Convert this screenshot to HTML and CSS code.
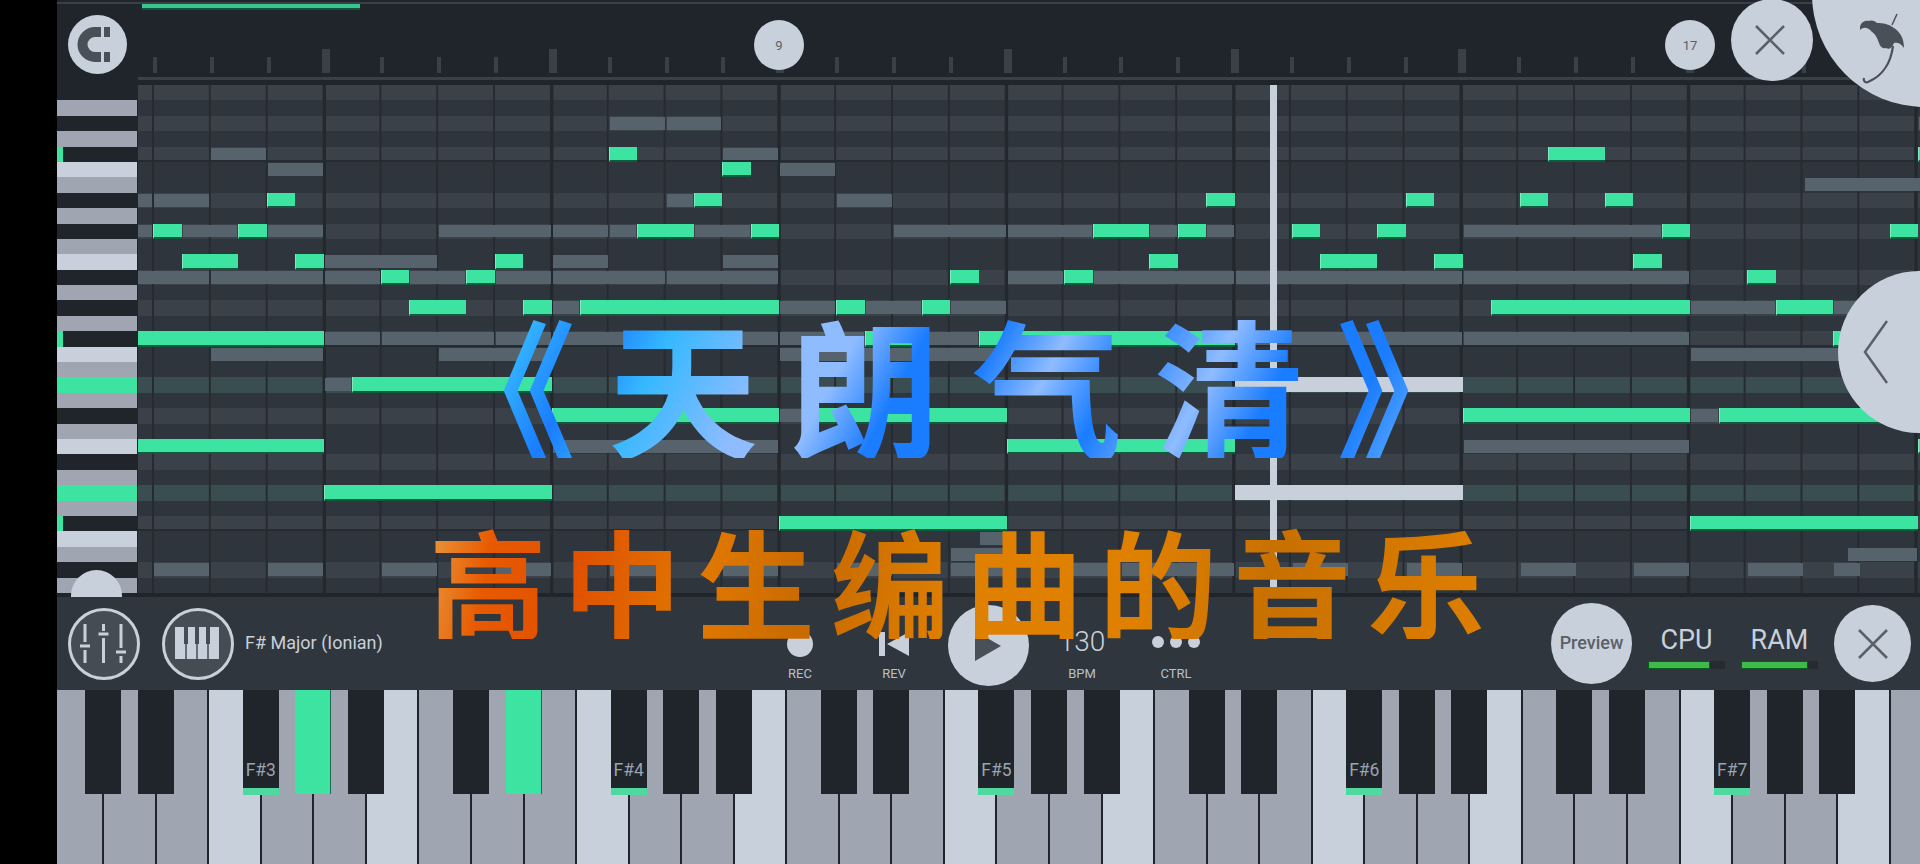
FILE: index.html
```html
<!DOCTYPE html>
<html lang="zh-CN">
<head>
  <meta charset="UTF-8">
  <meta name="viewport" content="width=device-width, initial-scale=1.0">
  <title>天朗气清 - Piano Roll</title>
  <link rel="stylesheet" href="styles.css">
</head>
<body>
  <div class="app">

    <div class="ruler">
      <div class="magnet-cell">
        <div class="magnet">
          <svg width="59" height="59" viewBox="0 0 59 59">
            <path d="M33 17H27A12.5 12.5 0 0 0 27 42H33" fill="none" stroke="#4a5058" stroke-width="10"/>
            <rect x="36" y="12" width="6" height="10" fill="#4a5058"/>
            <rect x="36" y="37" width="6" height="10" fill="#4a5058"/>
          </svg>
        </div>
      </div>
      <div class="ruler-main">
        <div class="minimap-bar"></div>
        <div class="ticks" id="ticks"></div>
        <div class="ruler-line"></div>
      </div>
    </div>

    <div class="roll">
      <div class="side-keys" id="sideKeys">
        <div class="scroll-knob"></div>
      </div>
      <div class="grid">
        <div class="grid-rows" id="gridRows"></div>
        <div class="grid-lines"></div>
        <div class="notes" id="notes"></div>
        <div class="playhead"></div>
      </div>
    </div>

    <div class="toolbar">
      <div class="tool-left">
        <div class="ring-btn">
          <svg width="66" height="66" viewBox="3 3 66 66" stroke="#c8d0dc" stroke-width="3" fill="none">
            <path d="M17 16V34M17 42V55M12 38H22M35.500 16V23M35.500 30V55M30.500 26H40.500M53 16V40M53 48V55M48 44H58"/>
          </svg>
        </div>
        <div class="ring-btn">
          <svg width="66" height="66" viewBox="3 3 66 66">
            <rect x="13" y="19" width="44" height="32" fill="#c8d0dc"/>
            <path d="M24 19V51M35 19V51M46 19V51" stroke="#454c54" stroke-width="1.500"/>
            <path d="M24 19V36M35 19V36M46 19V36" stroke="#454c54" stroke-width="4"/>
          </svg>
        </div>
        <span class="scale-name">F# Major (Ionian)</span>
      </div>

      <div class="transport">
        <div class="transport-item">
          <div class="transport-icon"><span class="rec-dot"></span></div>
          <span class="transport-label">REC</span>
        </div>
        <div class="transport-item">
          <div class="transport-icon">
            <svg width="32" height="24" viewBox="0 0 32 24">
              <rect x="1" y="0" width="6" height="24" fill="#c8d0dc"/>
              <path d="M31 0V24L9 12Z" fill="#c8d0dc"/>
            </svg>
          </div>
          <span class="transport-label">REV</span>
        </div>
        <div class="transport-item play-item">
          <div class="play-btn">
            <svg width="28" height="30" viewBox="0 0 28 30"><path d="M1 0L27 15L1 30Z" fill="#4a5058"/></svg>
          </div>
        </div>
        <div class="transport-item">
          <div class="transport-icon bpm-value">130</div>
          <span class="transport-label">BPM</span>
        </div>
        <div class="transport-item">
          <div class="transport-icon dots"><span></span><span></span><span></span></div>
          <span class="transport-label">CTRL</span>
        </div>
      </div>

      <div class="tool-right">
        <div class="preview-btn">Preview</div>
        <div class="meter-box">
          <span class="meter-name">CPU</span>
          <div class="meter"><div class="meter-fill cpu-fill"></div></div>
        </div>
        <div class="meter-box">
          <span class="meter-name">RAM</span>
          <div class="meter"><div class="meter-fill ram-fill"></div></div>
        </div>
        <div class="close-btn">
          <svg width="30" height="30" viewBox="0 0 30 30"><path d="M1 1L29 29M29 1L1 29" stroke="#5a6068" stroke-width="2.500"/></svg>
        </div>
      </div>
    </div>

    <div class="keyboard" id="keyboard"></div>

    <!-- round buttons lying over the roll -->
    <div class="bar-bubble bubble-9">9</div>
    <div class="bar-bubble bubble-17">17</div>
    <div class="top-close">
      <svg width="30" height="30" viewBox="0 0 30 30"><path d="M1 1L29 29M29 1L1 29" stroke="#5a6068" stroke-width="2.500"/></svg>
    </div>
    <div class="logo-btn">
      <svg class="logo-fruit" width="60" height="80" viewBox="0 0 60 80">
        <path d="M5 17C6 12 10 10 14 11C17 10 20 11 22 13C28 13 34 14 39 18C45 22 49 28 49 38C46 33 42 32 39 33C37 38 34 40 31 38C28 39 25 37 24 33C22 27 20 24 17 22C14 18 9 16 5 20Z" fill="#4a5058"/>
        <path d="M38 36C36 52 28 66 13 72C10 73 8 71 9 68" fill="none" stroke="#4a5058" stroke-width="2.200"/>
        <path d="M37 15L42 4" fill="none" stroke="#4a5058" stroke-width="1.500"/>
      </svg>
    </div>
    <div class="side-tab">
      <svg class="side-chevron" width="26" height="64" viewBox="0 0 26 64"><path d="M24 1L2 32L24 63" fill="none" stroke="#5a6068" stroke-width="2.500"/></svg>
    </div>

    <!-- video title on top of everything -->
    <div class="title-main">《天朗气清》</div>
    <div class="title-sub">高中生编曲的音乐</div>
  </div>

  <script src="app.js"></script>
</body>
</html>
```

FILE: styles.css
```css
:root {
  --bg: #20252c;
  --panel: #30363d;
  --light: #c8d0dc;
  --gray-key: #9fa6b2;
  --green: #3de3a0;
  --green-dark: #0b5d3e;
  --ghost: #56636c;
  --row-dark: #2f353c;
  --row-light: #3a4148;
  --icon: #5a6068;
}
* { box-sizing: border-box; margin: 0; padding: 0; }
html, body { height: 100%; }
body {
  background: #000;
  overflow: hidden;
  font-family: Roboto, sans-serif;
  color: var(--light);
}
.app {
  position: relative;
  margin-left: 57px;
  width: 1863px;
  height: 864px;
  overflow: hidden;
  background: var(--bg);
}

/* ruler */
.ruler {
  display: flex;
  height: 85px;
  background: linear-gradient(#3a4047, #3a4047) 0 2px / 100% 2px no-repeat var(--bg);
}
.magnet-cell {
  flex: none;
  width: 81px;
  padding: 15px 0 0 11px;
}
.magnet {
  width: 59px;
  height: 59px;
  border-radius: 50%;
  background: var(--light);
}
.ruler-main {
  flex: 1;
  min-width: 0;
  padding-top: 4px;
  overflow: hidden;
}
.minimap-bar {
  width: 218px;
  height: 6px;
  margin-left: 4px;
  background: var(--green);
  opacity: 0.85;
  border-bottom: 2px solid var(--green-dark);
}
.ticks {
  display: flex;
  align-items: flex-end;
  height: 24px;
  margin: 39px 0 0 -11.400px;
}
.tick-cell {
  flex: none;
  width: 56.850px;
  display: flex;
  justify-content: center;
}
.tick {
  width: 4px;
  height: 16px;
  background: #3a4047;
}
.tick.bar {
  width: 8px;
  height: 24px;
}
.ruler-line {
  height: 3px;
  margin-top: 4px;
  background: #3a4047;
}

/* piano roll */
.roll {
  display: flex;
  height: 512px;
}
.side-keys {
  position: relative;
  flex: none;
  width: 81px;
  padding-right: 1px;
  overflow: hidden;
}
.side-key {
  height: 15.400px;
  background: var(--gray-key);
  position: relative;
}
.side-key.black { background: var(--bg); }
.side-key.light { background: var(--light); }
.side-key.active { background: var(--green); }
.side-key.tip::before {
  content: '';
  position: absolute;
  left: 0;
  top: 0;
  width: 6px;
  height: 18px;
  background: var(--green);
}
.scroll-knob {
  position: absolute;
  left: 14px;
  top: 485px;
  width: 51px;
  height: 27px;
  border-radius: 26px 26px 0 0;
  background: var(--light);
}
.grid {
  position: relative;
  flex: 1;
  min-width: 0;
  overflow: hidden;
  background: var(--bg);
}
.grid-rows {
  display: grid;
  grid-template-rows: repeat(33, 15.400px);
}
.grid-row { background: var(--row-dark); }
.grid-row.lit { background: var(--row-light); }
.grid-row.tint { background: #3a4d50; }
.grid-row.octave { border-bottom: 2px solid #262b31; }
.grid-lines {
  position: absolute;
  left: 0;
  top: 0;
  width: 100%;
  height: 508px;
  background-image:
    linear-gradient(90deg, #23282e 3px, transparent 3px),
    linear-gradient(90deg, #262b31 2px, transparent 2px);
  background-size: 227.400px 100%, 56.850px 100%;
  background-position: 185px 0, 14px 0;
}
.notes {
  position: absolute;
  left: -13.400px;
  top: 0;
  display: grid;
  grid-template-columns: repeat(132, 14.235px);
  grid-template-rows: repeat(33, 15.400px);
}
.note {
  background: var(--ghost);
  margin: 1px 1px 1.500px;
}
.note.green {
  margin: 0;
  background: var(--green);
  border-left: 1px solid #7fe9c0;
  border-bottom: 2px solid var(--green-dark);
}
.note.white {
  margin: 0 0 1px;
  background: var(--light);
}
.playhead {
  position: absolute;
  left: 1132px;
  top: 0;
  bottom: 0;
  width: 7px;
  background: var(--light);
}

/* toolbar */
.toolbar {
  display: flex;
  height: 93px;
  background: var(--panel);
}
.tool-left {
  flex: none;
  width: 696px;
  display: flex;
  align-items: center;
  gap: 22px;
  padding-left: 11px;
}
.ring-btn {
  width: 72px;
  height: 72px;
  border: 3px solid var(--light);
  border-radius: 50%;
  background: #454c54;
}
.scale-name {
  margin-left: -11px;
  padding-bottom: 3px;
  font-size: 18px;
}
.transport {
  flex: none;
  display: flex;
}
.transport-item {
  width: 94px;
  padding-top: 24px;
  display: flex;
  flex-direction: column;
  align-items: center;
}
.play-item { padding-top: 8px; }
.transport-icon {
  height: 46px;
  display: flex;
  align-items: center;
  justify-content: center;
}
.transport-label {
  font-size: 13px;
  line-height: 14px;
  color: #b8c0cc;
}
.rec-dot {
  width: 26px;
  height: 26px;
  border-radius: 50%;
  background: var(--light);
}
.play-btn {
  width: 81px;
  height: 81px;
  border-radius: 50%;
  background: var(--light);
  display: flex;
  align-items: center;
  justify-content: center;
}
.bpm-value {
  padding-bottom: 6px;
  font-size: 28px;
  font-weight: 300;
}
.dots {
  gap: 6px;
  padding-bottom: 4px;
}
.dots span {
  width: 12px;
  height: 12px;
  border-radius: 50%;
  background: var(--light);
}
.tool-right {
  margin-left: auto;
  display: flex;
  align-items: center;
  gap: 16px;
  padding-right: 9px;
}
.preview-btn {
  width: 81px;
  height: 81px;
  border-radius: 50%;
  background: var(--light);
  color: var(--icon);
  display: flex;
  align-items: center;
  justify-content: center;
  padding-bottom: 3px;
  font-size: 18px;
  font-weight: 500;
}
.meter-box {
  width: 77px;
  margin-top: 6px;
  display: flex;
  flex-direction: column;
  align-items: center;
  gap: 6px;
}
.meter-name {
  font-size: 27px;
  line-height: 30px;
}
.meter {
  width: 100%;
  height: 8px;
  background: #262b31;
}
.meter-fill {
  height: 100%;
  background: #3dbb4a;
  border: 1px solid #0d5a1c;
}
.cpu-fill { width: 62px; }
.ram-fill { width: 67px; }
.close-btn {
  width: 77px;
  height: 77px;
  border-radius: 50%;
  background: var(--light);
  display: flex;
  align-items: center;
  justify-content: center;
}

/* keyboard at the bottom */
.keyboard {
  display: flex;
  height: 174px;
  margin-left: -5.400px;
}
.white-key {
  position: relative;
  flex: none;
  width: 52.550px;
  background: var(--gray-key);
  border-right: 2px solid var(--bg);
}
.white-key.light { background: var(--light); }
.black-key {
  position: absolute;
  z-index: 1;
  right: -19px;
  top: 0;
  width: 36px;
  height: 104px;
  background: var(--bg);
  text-align: center;
  color: #9aa3ae;
  font-size: 17.500px;
  padding-top: 70px;
}
.black-key.on {
  background: var(--green);
  border-right: 1.500px solid #1d6a50;
}
.black-key.marked { border-bottom: 7px solid #4fd8a0; height: 105px; }

/* overlays at the top right */
.bar-bubble {
  position: absolute;
  top: 20px;
  width: 50px;
  height: 50px;
  border-radius: 50%;
  background: var(--light);
  color: var(--icon);
  font-size: 13px;
  display: flex;
  align-items: center;
  justify-content: center;
}
.bubble-9 { left: 697px; }
.bubble-17 { left: 1608px; }
.top-close {
  position: absolute;
  left: 1674px;
  top: -1px;
  width: 82px;
  height: 82px;
  padding-right: 4px;
  border-radius: 50%;
  background: var(--light);
  display: flex;
  align-items: center;
  justify-content: center;
}
.logo-btn {
  position: absolute;
  left: 1755px;
  top: -119px;
  width: 226px;
  height: 226px;
  border-radius: 50%;
  background: var(--light);
}
.logo-fruit {
  position: absolute;
  left: 43px;
  top: 129px;
}
.side-tab {
  position: absolute;
  left: 1781px;
  top: 271px;
  width: 162px;
  height: 162px;
  border-radius: 50%;
  background: var(--light);
}
.side-chevron {
  position: absolute;
  left: 25px;
  top: 49px;
}

/* title text */
.title-main, .title-sub {
  position: absolute;
  white-space: nowrap;
  font-family: "Noto Sans CJK SC", sans-serif;
  font-weight: 700;
  line-height: 1;
  color: transparent;
  -webkit-background-clip: text;
  background-clip: text;
}
.title-main {
  left: 369px;
  top: 308px;
  font-size: 150px;
  letter-spacing: 32px;
  background-image: linear-gradient(118deg,
    #1a7cff 0%, #35b8ff 9%, #1a7cff 16%, #35b8ff 22%, #8fbcff 32%, #8fbcff 38%,
    #1a7cff 44%, #1a7cff 50%, #8fbcff 56%, #1a7cff 62%, #8fbcff 70%, #1a7cff 76%, #1a7cff 84%, #7fc4ff 94%);
}
.title-sub {
  left: 372px;
  top: 521px;
  font-size: 118px;
  letter-spacing: 16px;
  background-image: linear-gradient(100deg,
    #e89a40 0%, #e85a00 6%, #e05000 14%, #e07800 26%, #c86a00 36%, #e08000 50%, #e08000 66%, #c87000 78%, #e08000 100%);
}
```

FILE: app.js
```js
const ROWS = 33;
const BLACK_ROWS = [0, 2, 4, 7, 9, 12, 14, 16, 19, 21, 24, 26, 28, 31];
const LIGHT_ROWS = [5, 11, 17, 23, 29];
const ACTIVE_ROWS = [19, 26];
const TIP_ROWS = [4, 16, 28];

// [start, end, kind] in half beats, kind: g = green, n = ghost, w = selected
const noteData = {
  2: [[16, 18, 'n'], [18, 20, 'n'], [62, 64, 'n']],
  4: [[2, 4, 'n'], [16, 17, 'g'], [20, 22, 'n'], [49, 51, 'g'], [62, 64, 'g']],
  5: [[4, 6, 'n'], [20, 21, 'g'], [22, 24, 'n']],
  6: [[58, 64, 'n']],
  7: [[-1, 0, 'n'], [0, 2, 'n'], [4, 5, 'g'], [18, 19, 'n'], [19, 20, 'g'], [24, 26, 'n'], [37, 38, 'g'], [44, 45, 'g'], [48, 49, 'g'], [51, 52, 'g']],
  9: [[-1, 0, 'n'], [0, 1, 'g'], [1, 3, 'n'], [3, 4, 'g'], [4, 6, 'n'], [10, 14, 'n'], [14, 16, 'n'], [16, 17, 'n'], [17, 19, 'g'], [19, 21, 'n'], [21, 22, 'g'], [26, 30, 'n'], [30, 33, 'n'], [33, 35, 'g'], [35, 36, 'n'], [36, 37, 'g'], [37, 38, 'n'], [40, 41, 'g'], [43, 44, 'g'], [46, 53, 'n'], [53, 54, 'g'], [61, 62, 'g']],
  11: [[1, 3, 'g'], [5, 6, 'g'], [6, 10, 'n'], [12, 13, 'g'], [14, 16, 'n'], [20, 22, 'n'], [35, 36, 'g'], [41, 43, 'g'], [45, 46, 'g'], [52, 53, 'g']],
  12: [[-1, 2, 'n'], [2, 6, 'n'], [6, 8, 'n'], [8, 9, 'g'], [9, 11, 'n'], [11, 12, 'g'], [12, 14, 'n'], [14, 18, 'n'], [18, 22, 'n'], [28, 29, 'g'], [30, 32, 'n'], [32, 33, 'g'], [33, 38, 'n'], [38, 46, 'n'], [46, 54, 'n'], [56, 57, 'g']],
  14: [[9, 11, 'g'], [13, 14, 'g'], [14, 15, 'n'], [15, 22, 'g'], [22, 24, 'n'], [24, 25, 'g'], [25, 27, 'n'], [27, 28, 'g'], [28, 30, 'n'], [47, 54, 'g'], [54, 57, 'n'], [57, 59, 'g'], [59, 64, 'n']],
  16: [[-1, 6, 'g'], [6, 8, 'n'], [8, 12, 'n'], [12, 14, 'n'], [14, 22, 'n'], [22, 25, 'n'], [25, 27, 'g'], [27, 29, 'n'], [29, 38, 'g'], [38, 46, 'n'], [46, 54, 'n'], [59, 61, 'g']],
  17: [[2, 6, 'n'], [10, 14, 'n'], [22, 30, 'n'], [54, 64, 'n']],
  19: [[6, 7, 'n'], [7, 14, 'g'], [38, 46, 'w']],
  21: [[14, 22, 'g'], [22, 23, 'n'], [23, 30, 'g'], [46, 54, 'g'], [54, 55, 'n'], [55, 64, 'g']],
  23: [[-1, 6, 'g'], [14, 22, 'n'], [30, 38, 'g'], [46, 54, 'n'], [62, 64, 'g']],
  26: [[6, 14, 'g'], [38, 46, 'w']],
  28: [[22, 30, 'g'], [54, 62, 'g']],
  29: [[29, 30, 'n']],
  30: [[28, 30, 'n'], [59.5, 62, 'n']],
  31: [[0, 2, 'n'], [4, 6, 'n'], [8, 10, 'n'], [12, 14, 'n'], [16, 18, 'n'], [20, 22, 'n'], [24, 26, 'n'], [28, 30, 'n'], [32, 34, 'n'], [34, 38, 'n'], [40, 42, 'n'], [44, 46, 'n'], [48, 50, 'n'], [52, 54, 'n'], [56, 58, 'n'], [59, 60, 'n']]
};

function makeDiv(className, parent) {
  const el = document.createElement('div');
  el.className = className;
  parent.appendChild(el);
  return el;
}

// ruler ticks, every fourth one is a bar
const ticks = document.getElementById('ticks');
for (let i = 0; i < 32; i++) {
  const cell = makeDiv('tick-cell', ticks);
  makeDiv(i % 4 === 3 ? 'tick bar' : 'tick', cell);
}

// keys on the left and the rows of the grid
const sideKeys = document.getElementById('sideKeys');
const gridRows = document.getElementById('gridRows');
const knob = sideKeys.querySelector('.scroll-knob');
for (let r = 0; r < ROWS; r++) {
  let keyClass = 'side-key';
  let rowClass = 'grid-row';
  if (BLACK_ROWS.includes(r)) {
    keyClass += ' black';
    rowClass += ' lit';
  }
  if (LIGHT_ROWS.includes(r)) keyClass += ' light';
  if (ACTIVE_ROWS.includes(r)) {
    keyClass += ' active';
    rowClass = 'grid-row tint';
  }
  if (TIP_ROWS.includes(r)) {
    keyClass += ' tip';
    rowClass += ' octave';
  }
  sideKeys.insertBefore(makeDiv(keyClass, sideKeys), knob);
  makeDiv(rowClass, gridRows);
}

// notes sit on a half-of-a-half-beat grid, first column is one half beat before 0
const notes = document.getElementById('notes');
const kinds = { g: 'note green', n: 'note', w: 'note white' };
Object.keys(noteData).forEach(row => {
  noteData[row].forEach(([start, end, kind]) => {
    const note = makeDiv(kinds[kind], notes);
    note.style.gridRow = Number(row) + 1;
    note.style.gridColumn = `${(start + 1) * 2 + 1} / ${(end + 1) * 2 + 1}`;
  });
});

// keyboard: C D E F G A B, no black key after E and B
const keyboard = document.getElementById('keyboard');
const OCTAVE_OF_F = { 3: 'F#3', 10: 'F#4', 17: 'F#5', 24: 'F#6', 31: 'F#7' };
const GREEN_BLACK = [4, 8];
for (let i = 0; i < 36; i++) {
  const degree = i % 7;
  const white = makeDiv(degree === 3 || degree === 6 ? 'white-key light' : 'white-key', keyboard);
  if (degree === 2 || degree === 6) continue;
  const black = makeDiv('black-key', white);
  if (GREEN_BLACK.includes(i)) black.classList.add('on');
  if (OCTAVE_OF_F[i]) {
    black.classList.add('marked');
    black.textContent = OCTAVE_OF_F[i];
  }
}
```
